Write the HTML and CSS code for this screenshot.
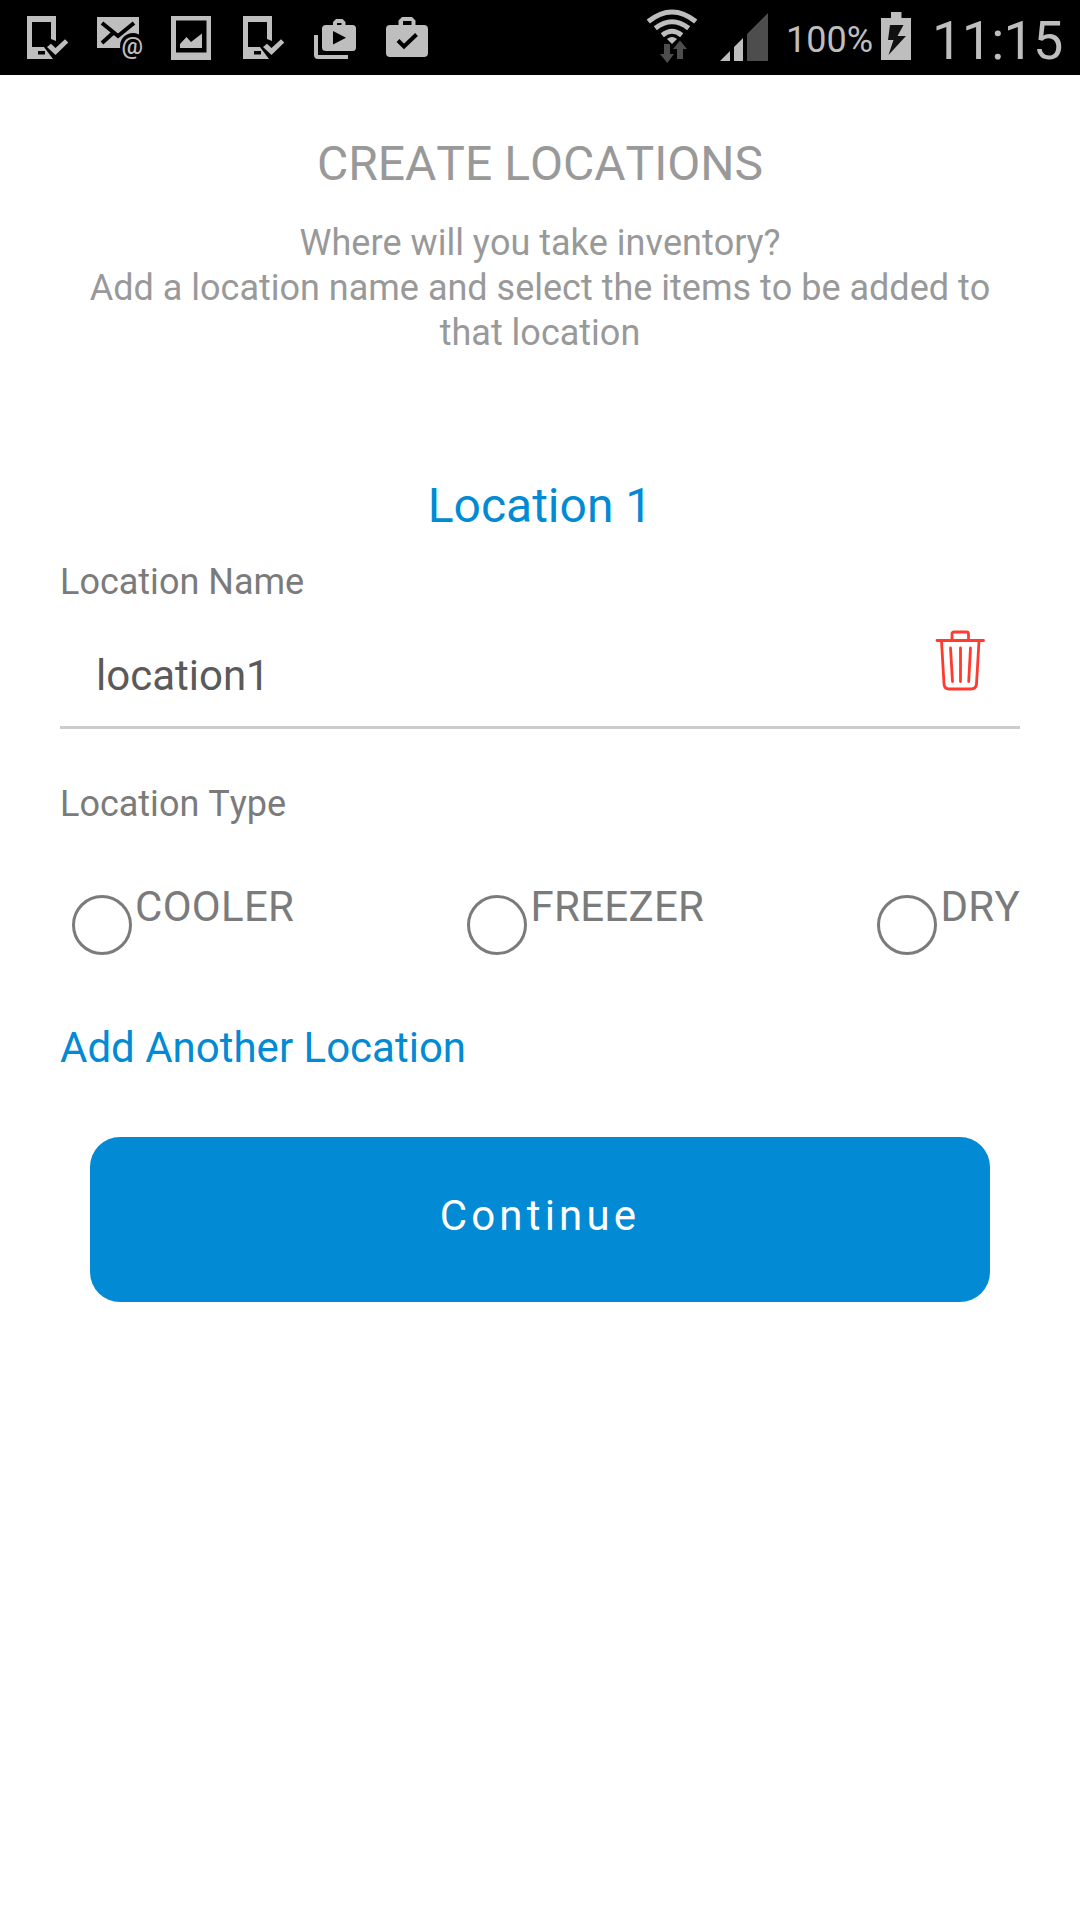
FILE: index.html
```html
<!DOCTYPE html>
<html lang="en">
<head>
<meta charset="utf-8">
<title>Create Locations</title>
<link rel="stylesheet" href="styles.css">
</head>
<body>
<header class="status">
  <div class="status-group notifications">
    <svg width="42" height="75" viewBox="0 0 42 75"><path fill-rule="evenodd" d="M0 16H29V41L24 39V22H5V47H17L26 59H0ZM11 51V54.500H18V51Z"/><path d="M20 47L24 43.800L28.500 48L38 39.200L41.300 42.500L28.500 55Z"/></svg>
    <svg width="47" height="75" viewBox="0 0 47 75"><path d="M0 17H42V48H0Z"/><path class="cut" d="M5 23L21 36L37 23M5 43L16 33"/><circle class="hole" cx="36" cy="46" r="13"/><text class="at" x="24.500" y="53.500">@</text></svg>
    <svg width="40" height="75" viewBox="0 0 40 75"><path fill-rule="evenodd" d="M0 16H40V60H0ZM5 20.500V52.500H35.500V20.500Z"/><path d="M9 48V44L15.500 37L20 42L31 33.500V48Z"/></svg>
    <svg width="42" height="75" viewBox="0 0 42 75"><path fill-rule="evenodd" d="M0 16H29V41L24 39V22H5V47H17L26 59H0ZM11 51V54.500H18V51Z"/><path d="M20 47L24 43.800L28.500 48L38 39.200L41.300 42.500L28.500 55Z"/></svg>
    <svg width="42" height="75" viewBox="0 0 42 75"><path d="M0 35H4V55H34V59H4Q0 59 0 55Z"/><path fill-rule="evenodd" d="M12 25H19V22L22 19H28.500L31.500 22V25H38.500Q42 25 42 28.500V47.500Q42 51 38.500 51H12Q8 51 8 47.500V28.500Q8 25 12 25ZM23 23V25H27.500V23ZM19 31V44.500L32 37.800Z"/></svg>
    <svg width="42" height="75" viewBox="0 0 42 75"><path fill-rule="evenodd" d="M4 25H12.500V20.500L16 17H26L29.500 20.500V25H38Q42 25 42 29V53Q42 57 38 57H4Q0 57 0 53V29Q0 25 4 25ZM17 21V25H25.500V21Z"/><path class="cut" d="M12 40.500L18 46.500L30.500 34.500"/></svg>
  </div>
  <div class="status-group system">
    <svg width="50" height="75" viewBox="0 0 50 75"><g class="wave"><path d="M1.300 21.500Q25 2.500 48.700 21.500"/><path d="M8.300 28.300Q25 15.200 41.700 28.300"/><path d="M15.300 35.200Q25 27.300 34.700 35.200"/></g><path d="M20 39Q25 35 30 39L25 44Z"/><path class="dim" d="M17 44H23V54H27L20.300 63L13 54H17ZM33 40.500L40 49H36V59H30V49H26Z"/></svg>
    <svg class="signal" width="48" height="75" viewBox="0 0 48 75"><path d="M0 61L10 51V61ZM14 61V47L23 38V61Z"/><path class="dim" d="M27 61V34L48 13V61Z"/></svg>
    <span class="percent">100%</span>
    <svg class="battery" width="30" height="75" viewBox="0 0 30 75"><path d="M0 18H10V12H20.500V18H30V60H0Z"/><path class="bolt" d="M9 25H22.500L16.500 36H25L7.500 55L12.500 40H7Z"/></svg>
    <time class="clock">11:15</time>
  </div>
</header>
<main class="screen">
  <h1 class="title">CREATE LOCATIONS</h1>
  <p class="intro">Where will you take inventory?<br>Add a location name and select the items to be added to that location</p>
  <h2 class="location-title">Location 1</h2>
  <div class="label">Location Name</div>
  <div class="field">
    <span class="value">location1</span>
    <svg class="trash" width="50" height="62" viewBox="0 0 50 62"><path d="M2 10.500H48.500M17 10V4Q17 2 19 2H31.500Q33.500 2 33.500 4V10M6.500 11L9 54Q9.500 59 14 59H36Q41 59 41.500 54L44 11M15.500 18L17.500 51.500M25.500 18V51.500M35.500 18L33.700 51.500"/></svg>
  </div>
  <div class="label type-label">Location Type</div>
  <div class="types">
    <label class="type"><input class="radio" type="radio" name="type">COOLER</label>
    <label class="type"><input class="radio" type="radio" name="type">FREEZER</label>
    <label class="type"><input class="radio" type="radio" name="type">DRY</label>
  </div>
  <a class="add">Add Another Location</a>
  <button class="continue">Continue</button>
</main>
</body>
</html>
```
FILE: styles.css
```css
* { box-sizing: border-box; }
body {
  margin: 0;
  min-height: 1920px;
  background: #fff;
  font-family: Roboto, sans-serif;
  font-kerning: none;
}
.status {
  display: flex;
  justify-content: space-between;
  height: 75px;
  padding-left: 27px;
  background: #000;
  color: #bebebe;
  fill: #bebebe;
}
.status svg { display: block; flex: none; }
.status-group { display: flex; }
.system { flex: 0 0 433px; }
.notifications { gap: 29px; }
.notifications svg:nth-child(2) { margin: 0 -2px 0 -1px; }
.notifications svg:nth-child(4) { margin-left: 3px; }
.notifications svg:nth-child(6) { margin-left: 1px; }
.cut { fill: none; stroke: #000; stroke-width: 4; }
.hole { fill: #000; }
.at { font-size: 24px; font-weight: 500; }
.wave { fill: none; stroke: #bebebe; stroke-width: 5; }
.dim { fill: #4d4d4d; }
.bolt { fill: #111; }
.signal { margin-left: 23px; }
.percent { margin-left: 18px; font-size: 36px; line-height: 81px; }
.battery { margin-left: 8px; }
.clock { margin-left: 21px; font-size: 54px; line-height: 81px; letter-spacing: -0.8px; }

.screen {
  display: flex;
  flex-direction: column;
  padding: 61px 60px 0;
}
.title, .location-title {
  margin: 0;
  font-size: 48px;
  font-weight: 400;
  line-height: 56px;
  text-align: center;
}
.title { color: #999; }
.intro {
  margin: 29px 0 0;
  padding: 0 20px;
  color: #999;
  font-size: 36px;
  line-height: 45px;
  text-align: center;
}
.location-title { margin-top: 122px; color: #028ad4; }
.label { margin-top: 26px; color: #7b7b7b; font-size: 36px; line-height: 44px; }
.field {
  display: flex;
  justify-content: space-between;
  height: 125px;
  padding: 26px 35px 0 36px;
  border-bottom: 3px solid #ccc;
}
.value { padding-top: 21px; color: #5a5a5a; font-size: 42px; line-height: 50px; }
.trash { fill: none; stroke: #ff3b30; stroke-width: 2.8; stroke-linecap: round; }
.type-label { margin-top: 53px; }
.types { display: flex; justify-content: space-between; margin-top: 56px; }
.type {
  display: flex;
  color: #7b7b7b;
  font-size: 42px;
  line-height: 50px;
  letter-spacing: 0.3px;
}
.radio {
  appearance: none;
  width: 60px;
  height: 60px;
  margin: 13px 3px 0 12px;
  border: 3px solid #7b7b7b;
  border-radius: 50%;
}
.add { margin-top: 68px; color: #028ad4; font-size: 42px; line-height: 50px; }
.continue {
  height: 165px;
  margin: 64px 30px 0;
  padding: 0 0 8px;
  border: 0;
  border-radius: 30px;
  background: #028ad4;
  color: #fff;
  font: 42px Roboto, sans-serif;
  font-kerning: none;
  letter-spacing: 4.2px;
}
```
